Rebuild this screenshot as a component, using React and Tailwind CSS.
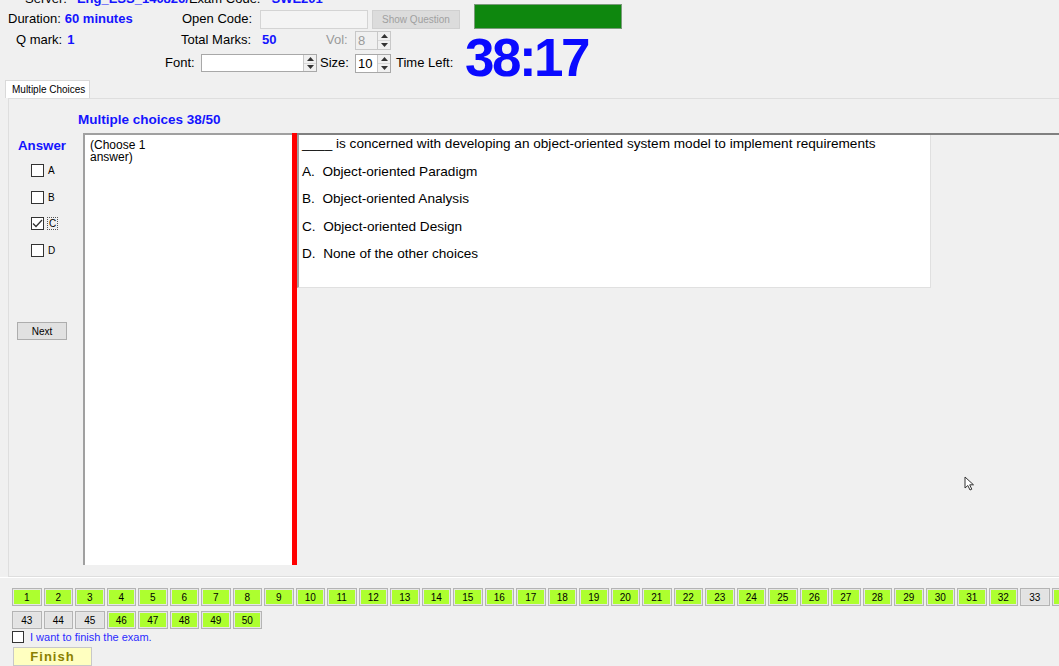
import React from 'react';

const font = { fontFamily: '"Liberation Sans", Arial, sans-serif' };

const Arrows = () => (
  <div className="flex flex-col w-[13px] h-full border-l border-[#c8c8c8] bg-[#f0f0f0]">
    <div className="flex-1 flex items-center justify-center border-b border-[#d8d8d8]">
      <svg width="7" height="4" viewBox="0 0 7 4"><path d="M0 4 L3.5 0 L7 4 Z" fill="#333" /></svg>
    </div>
    <div className="flex-1 flex items-center justify-center">
      <svg width="7" height="4" viewBox="0 0 7 4"><path d="M0 0 L3.5 4 L7 0 Z" fill="#333" /></svg>
    </div>
  </div>
);

const Spinner = ({ value, disabled, className }) => (
  <div
    className={
      disabled
        ? `flex border border-[#c8c8c8] bg-[#f0f0f0] ${className}`
        : `flex border border-[#a8a8a8] bg-white ${className}`
    }
  >
    <div className={disabled ? 'flex-1 pl-[2px] text-[13px] leading-[17px] text-[#9a9a9a]' : 'flex-1 pl-[2px] text-[13px] leading-[17px] text-black'}>
      {value}
    </div>
    <Arrows />
  </div>
);

const Check = ({ checked }) => (
  <div className="w-[13px] h-[13px] border border-[#333] bg-white flex items-center justify-center">
    {checked && (
      <svg width="11" height="9" viewBox="0 0 11 9">
        <path d="M1 4.5 L4 7.5 L10 1" stroke="#333" strokeWidth="1.3" fill="none" />
      </svg>
    )}
  </div>
);

const unanswered = [33, 43, 44, 45];

const NumBtn = ({ n }) => {
  const done = !unanswered.includes(n);
  return (
    <div className="shrink-0 w-[29.5px] h-[18px] mr-[2px] border border-[#b4b4b4] bg-[#e6e6e6] p-[1px]">
      <div
        className={
          done
            ? 'h-full bg-[#adff2f] flex items-center justify-center text-[10px] text-black'
            : 'h-full bg-[#e3e3e3] flex items-center justify-center text-[10px] text-black'
        }
      >
        {n}
      </div>
    </div>
  );
};

const options = [
  'A.  Object-oriented Paradigm',
  'B.  Object-oriented Analysis',
  'C.  Object-oriented Design',
  'D.  None of the other choices',
];

export default function App() {
  const row1 = Array.from({ length: 42 }, (_, i) => i + 1);
  const row2 = Array.from({ length: 8 }, (_, i) => i + 43);

  return (
    <div className="relative w-[1059px] h-[666px] overflow-hidden bg-[#f0f0f0] text-[13px] text-black" style={font}>
      {/* cut-off server row */}
      <div className="h-[8px] overflow-hidden">
        <div className="-mt-[9px] flex pl-[25px] leading-[15px] whitespace-nowrap">
          <span>Server:</span>
          <span className="ml-[10px] font-bold text-[#1414ff]">Eng_ESS_140826/</span>
          <span>Exam Code:</span>
          <span className="ml-[11px] font-bold text-[#1414ff]">SWE201</span>
        </div>
      </div>

      {/* row 1 */}
      <div className="flex items-center h-[21px] pl-[8px] whitespace-nowrap">
        <div className="w-[174px] flex">
          <span>Duration:</span>
          <span className="ml-[4px] font-bold text-[#1414ff]">60 minutes</span>
        </div>
        <div className="w-[78px]">Open Code:</div>
        <div className="w-[108px] h-[19px] border border-[#d4d4d4] bg-[#f4f4f4] self-end" />
        <div className="ml-[4px] w-[88px] h-[19px] self-end border border-[#d0d0d0] bg-[#dcdcdc] text-[10px] text-[#a0a0a0] flex items-center justify-center">
          Show Question
        </div>
        <div className="ml-[14px] w-[148px] h-[25px] self-end border border-[#7a9a7a] bg-[#0e870e]" />
      </div>

      {/* row 2 */}
      <div className="flex items-center h-[22px] pl-[16px] whitespace-nowrap">
        <div className="w-[165px] flex">
          <span>Q mark:</span>
          <span className="ml-[5px] font-bold text-[#1414ff]">1</span>
        </div>
        <div className="w-[81px]">Total Marks:</div>
        <div className="w-[64px] font-bold text-[#1414ff]">50</div>
        <div className="w-[29px] text-[#9a9a9a]">Vol:</div>
        <Spinner value="8" disabled className="w-[36px] h-[19px]" />
      </div>

      {/* row 3 */}
      <div className="flex items-center h-[24px] pl-[165px] whitespace-nowrap">
        <div className="w-[36px]">Font:</div>
        <Spinner value="" className="w-[116px] h-[18px]" />
        <div className="ml-[3px] w-[35px]">Size:</div>
        <Spinner value="10" className="w-[36px] h-[19px]" />
        <div className="ml-[5px] w-[69px]">Time Left:</div>
        <div className="self-end -mb-[9px] text-[53px] leading-none font-bold text-[#0a0aff] tracking-[-2.5px]">
          38:17
        </div>
      </div>

      {/* tab header */}
      <div className="mt-[5px] pl-[5px] flex">
        <div className="w-[85px] h-[18px] bg-white border-t border-l border-r border-[#d9d9d9] text-[10px] leading-[17px] pl-[6px] whitespace-nowrap">
          Multiple Choices
        </div>
      </div>

      {/* tab panel */}
      <div className="ml-[8px] border-t border-l border-b border-[#dedede] h-[479px] flex flex-col">
        <div className="h-[34px] pl-[69px] pt-[12px] leading-[17px] text-[13.5px] font-bold text-[#1414ff]">
          Multiple choices 38/50
        </div>
        <div className="flex h-[432px]">
          {/* answer column */}
          <div className="w-[74px] shrink-0 flex flex-col">
            <div className="pt-[4px] pl-[9px] leading-[17px] text-[13.3px] font-bold text-[#1414ff]">Answer</div>
            <div className="mt-[10px] pl-[22px] flex flex-col gap-[13.7px]">
              {['A', 'B', 'C', 'D'].map((l) => (
                <div key={l} className="flex items-center h-[13px]">
                  <Check checked={l === 'C'} />
                  {l === 'C' ? (
                    <span className="ml-[3px] px-[1px] border border-dotted border-[#555] text-[10px] leading-[11px]">C</span>
                  ) : (
                    <span className="ml-[4px] text-[10px] leading-[11px]">{l}</span>
                  )}
                </div>
              ))}
            </div>
            <div className="mt-[65px] ml-[8px] w-[50px] h-[18px] border border-[#adadad] bg-[#e1e1e1] text-[10px] flex items-center justify-center">
              Next
            </div>
          </div>

          {/* instruction box */}
          <div className="w-[209px] shrink-0 bg-white border-t-2 border-l-2 border-[#a0a0a0] pl-[5px] pt-[4px] text-[12px] leading-[12px]">
            (Choose 1
            <br />
            answer)
          </div>

          {/* red divider */}
          <div className="w-[5px] shrink-0 bg-[#ff0000]" />

          {/* question */}
          <div className="flex-1 border-t-2 border-[#808080]">
            <div className="w-[634px] h-[153px] bg-white border-l-2 border-[#a0a0a0] border-r border-b border-r-[#e0e0e0] border-b-[#e0e0e0] pl-[3px] flex flex-col gap-[9.5px] text-[13.6px]">
              <div className="leading-[18px] whitespace-nowrap">____ is concerned with developing an object-oriented system model to implement requirements</div>
              {options.map((o) => (
                <div key={o} className="leading-[18px] whitespace-pre">{o}</div>
              ))}
            </div>
          </div>
        </div>
      </div>
      <div className="h-[1px] bg-white" />

      {/* question navigator */}
      <div className="mt-[10px] pl-[12px] flex">
        {row1.map((n) => (
          <NumBtn key={n} n={n} />
        ))}
      </div>
      <div className="mt-[5px] pl-[12px] flex">
        {row2.map((n) => (
          <NumBtn key={n} n={n} />
        ))}
      </div>
      <div className="mt-[2px] pl-[12px] flex items-center h-[12px]">
        <div className="w-[12px] h-[12px] border border-[#333] bg-white" />
        <span className="ml-[6px] text-[11px] text-[#2b2bff]">I want to finish the exam.</span>
      </div>
      <div className="mt-[4px] ml-[13px] w-[79px] h-[19px] border border-[#c8c8c8] bg-[#ffffc0] flex items-center justify-center text-[13px] font-bold text-[#8a8000] tracking-[1px]">
        Finish
      </div>

      {/* mouse pointer */}
      <svg className="absolute left-[964px] top-[476px]" width="12" height="16" viewBox="0 0 12 16">
        <path d="M1 1 L1 12 L3.8 9.5 L6 14 L7.8 13.2 L5.7 8.8 L9.5 8.8 Z" fill="white" stroke="#333" strokeWidth="1" />
      </svg>
    </div>
  );
}
